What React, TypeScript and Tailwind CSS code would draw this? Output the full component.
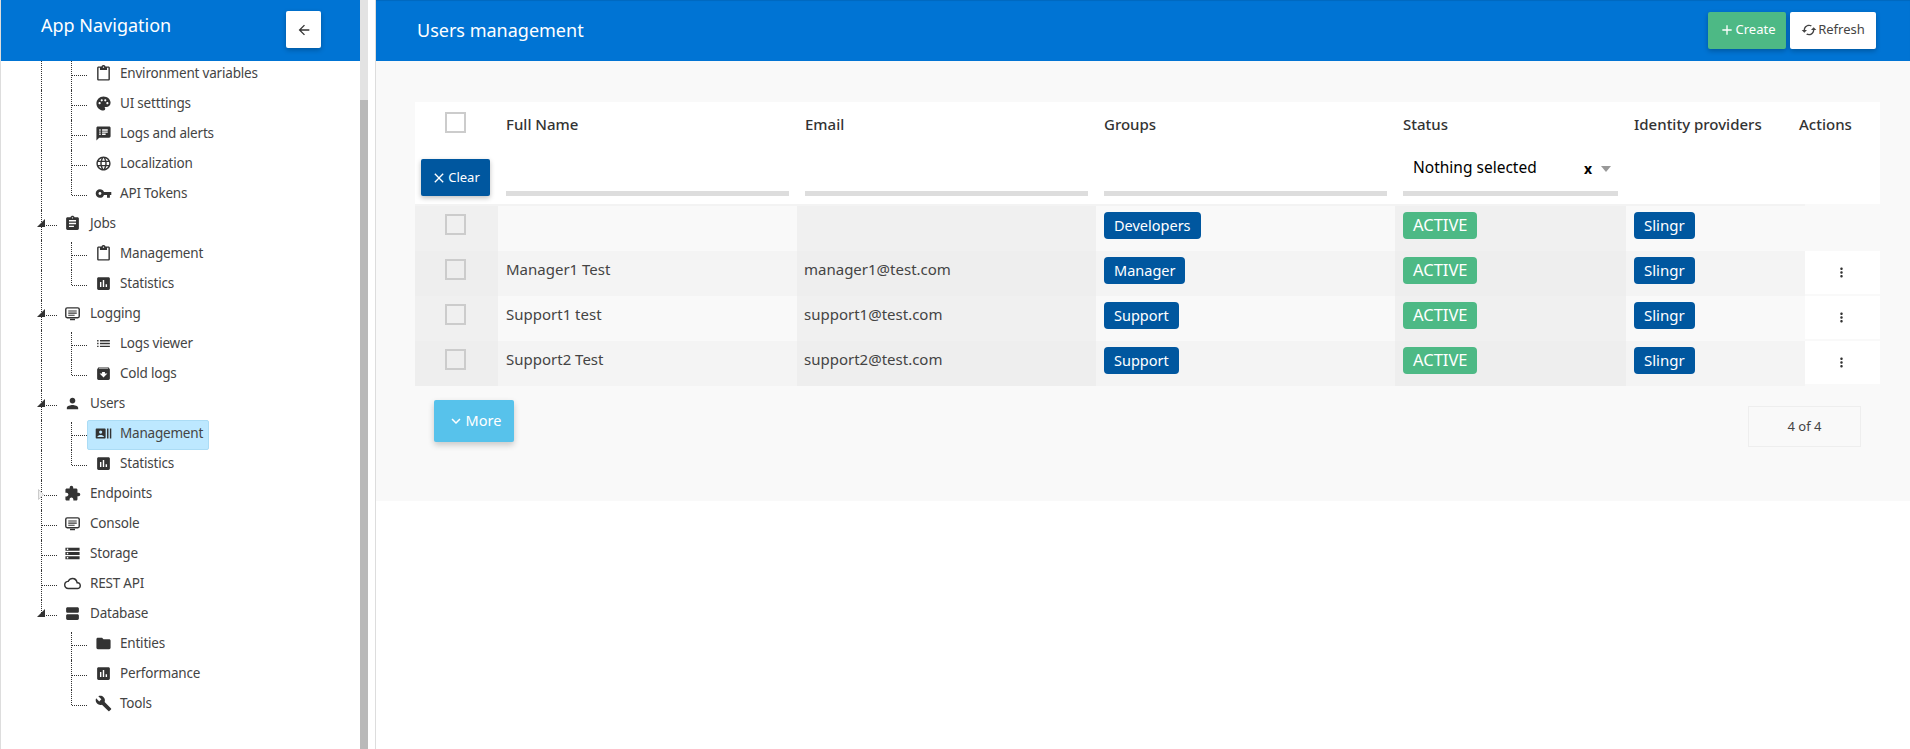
import {
  MdAdd,
  MdArchive,
  MdArrowBack,
  MdAssessment,
  MdAssignment,
  MdBuild,
  MdCached,
  MdClose,
  MdExtension,
  MdFolder,
  MdKeyboardArrowDown,
  MdLanguage,
  MdList,
  MdMoreVert,
  MdOutlineCloud,
  MdOutlineContentPaste,
  MdPalette,
  MdPerson,
  MdRecentActors,
  MdSpeakerNotes,
  MdStorage,
  MdViewAgenda,
  MdVpnKey,
} from "react-icons/md";
import type { ComponentType } from "react";

type IconProps = { className?: string };

type NavRow = {
  label: string;
  icon: ComponentType<IconProps>;
  depth: 1 | 2;
  first?: boolean;
  last?: boolean;
  marker?: "open" | "closed";
  active?: boolean;
  endTree?: boolean;
  noOuter?: boolean;
};

// monitor with text lines, not in the icon set
function ConsoleIcon({ className }: IconProps) {
  return (
    <svg className={className} viewBox="0 0 24 24" fill="none" stroke="currentColor">
      <rect x="2.5" y="4" width="19" height="14" rx="2" strokeWidth="2" />
      <path d="M6 8.5h12M6 11.5h12M6 14.5h9" strokeWidth="1.6" />
      <path d="M8.5 20.5h7" strokeWidth="2" />
    </svg>
  );
}

const navRows: NavRow[] = [
  { label: "Environment variables", icon: MdOutlineContentPaste, depth: 2 },
  { label: "UI setttings", icon: MdPalette, depth: 2 },
  { label: "Logs and alerts", icon: MdSpeakerNotes, depth: 2 },
  { label: "Localization", icon: MdLanguage, depth: 2 },
  { label: "API Tokens", icon: MdVpnKey, depth: 2, last: true },
  { label: "Jobs", icon: MdAssignment, depth: 1, marker: "open" },
  { label: "Management", icon: MdOutlineContentPaste, depth: 2, first: true },
  { label: "Statistics", icon: MdAssessment, depth: 2, last: true },
  { label: "Logging", icon: ConsoleIcon, depth: 1, marker: "open" },
  { label: "Logs viewer", icon: MdList, depth: 2, first: true },
  { label: "Cold logs", icon: MdArchive, depth: 2, last: true },
  { label: "Users", icon: MdPerson, depth: 1, marker: "open" },
  { label: "Management", icon: MdRecentActors, depth: 2, first: true, active: true },
  { label: "Statistics", icon: MdAssessment, depth: 2, last: true },
  { label: "Endpoints", icon: MdExtension, depth: 1, marker: "closed" },
  { label: "Console", icon: ConsoleIcon, depth: 1 },
  { label: "Storage", icon: MdStorage, depth: 1 },
  { label: "REST API", icon: MdOutlineCloud, depth: 1 },
  { label: "Database", icon: MdViewAgenda, depth: 1, marker: "open", endTree: true },
  { label: "Entities", icon: MdFolder, depth: 2, first: true, noOuter: true },
  { label: "Performance", icon: MdAssessment, depth: 2, noOuter: true },
  { label: "Tools", icon: MdBuild, depth: 2, last: true, noOuter: true },
];

const users = [
  { name: "", email: "", group: "Developers", actions: false },
  { name: "Manager1 Test", email: "manager1@test.com", group: "Manager", actions: true },
  { name: "Support1 test", email: "support1@test.com", group: "Support", actions: true },
  { name: "Support2 Test", email: "support2@test.com", group: "Support", actions: true },
];

function Dotted({ className }: { className: string }) {
  return <span className={`shrink-0 border-dotted border-[#333] ${className}`} />;
}

function TreeRow({ row }: { row: NavRow }) {
  const Icon = row.icon;
  return (
    <div className="relative flex h-[30px] items-center pl-[40px]">
      {/* outer guide */}
      {row.noOuter ? (
        <span className="w-px shrink-0" />
      ) : (
        <Dotted className={`w-0 border-l ${row.endTree ? "h-[15px] self-start" : "h-[30px]"}`} />
      )}
      {row.depth === 2 && (
        <>
          <span className="w-[29px] shrink-0" />
          <Dotted
            className={`w-0 border-l ${row.last ? "h-[15px] self-start" : row.first ? "h-[28px] self-end" : "h-[30px]"}`}
          />
        </>
      )}
      <Dotted className="w-[15px] border-t" />
      <div
        className={`flex h-[30px] items-center rounded-[2px] border ${row.depth === 2 ? "pl-[7px]" : "pl-[6px]"} ${row.active ? "border-[#abdcf5] bg-[#bde8ff] pr-[5px]" : "border-transparent"}`}
      >
        <Icon className="size-[17px] shrink-0 -translate-y-[2px] text-[#333]" />
        <span
          className={`-translate-y-[2px] text-[13.5px] tracking-[-0.2px] whitespace-nowrap text-[#444] ${row.depth === 2 ? "ml-[8px]" : "ml-[9px]"}`}
        >
          {row.label}
        </span>
      </div>
      {row.marker === "open" && (
        <svg className="absolute top-[9px] left-[36px] size-[8px]" viewBox="0 0 8 8">
          <path d="M8 0V8H0Z" fill="#333" />
        </svg>
      )}
      {row.marker === "closed" && (
        <svg className="absolute top-[9px] left-[37px] h-[11px] w-[6px]" viewBox="0 0 6 11">
          <path d="M.5.5 5.5 5.5.5 10.5Z" fill="#eee" stroke="#ccc" />
        </svg>
      )}
    </div>
  );
}

function Sidebar() {
  return (
    <aside className="flex h-[749px] w-[376px] shrink-0 overflow-hidden border-x border-[#ddd] bg-white">
      <div className="flex w-[359px] flex-col">
        <div className="relative z-10 flex h-[61px] shrink-0 justify-between bg-[#0074d4] pt-[11px] pr-[39px] pl-[40px]">
          <h1 className="text-[18px] leading-[28px] text-white">App Navigation</h1>
          <button className="flex h-[37px] w-[35px] items-center justify-center rounded-[2px] bg-white text-[#333] shadow-[0_2px_5px_rgba(0,0,0,0.25)]">
            <MdArrowBack className="size-[16px]" />
          </button>
        </div>
        <div className="-mt-px">
          {navRows.map((row, i) => (
            <TreeRow key={i} row={row} />
          ))}
        </div>
      </div>
      {/* scrollbar */}
      <div className="flex w-[8px] shrink-0 flex-col">
        <div className="h-[100px] bg-[#e3e3e3]" />
        <div className="flex-1 bg-[#b9b9b9]" />
      </div>
    </aside>
  );
}

function Badge({ children, className }: { children: string; className: string }) {
  return (
    <span className={`inline-flex h-[27px] items-center rounded-[4px] px-[10px] text-white ${className}`}>
      {children}
    </span>
  );
}

const headCols = "grid grid-cols-[83px_299px_299px_299px_231px_165px_89px]";
const bodyCols = "grid grid-cols-[83px_299px_299px_299px_231px_179px_75px]";

function HeaderCell({ label, filter }: { label: string; filter?: boolean }) {
  return (
    <div className="flex flex-col px-[8px]">
      <div className="h-[43px] pt-[10px] text-[15px] leading-[24px] font-medium whitespace-nowrap text-[#333]">{label}</div>
      {filter && <div className="mt-[46px] h-[5px] bg-[#ddd]" />}
    </div>
  );
}

function UsersTable() {
  return (
    <div className="w-[1465px]">
      <div className={`${headCols} h-[102px] bg-white`}>
        <div className="flex flex-col items-center pt-[10px] pr-[2px]">
          <span className="block size-[21px] border-2 border-[#ccc]" />
          <button className="mt-[26px] flex h-[37px] w-[69px] shrink-0 items-center justify-center gap-px rounded-[2px] bg-[#00579f] text-[13px] text-white shadow-[0_2px_5px_rgba(0,0,0,0.25)]">
            <MdClose className="size-[16px]" />
            Clear
          </button>
        </div>
        <HeaderCell label="Full Name" filter />
        <HeaderCell label="Email" filter />
        <HeaderCell label="Groups" filter />
        <div className="flex flex-col px-[8px]">
          <div className="h-[43px] pt-[10px] text-[15px] leading-[24px] font-medium text-[#333]">Status</div>
          <div className="flex h-[46px] items-center justify-between pr-[7px] pl-[10px] text-[15.5px] text-black">
            Nothing selected
            <span className="flex items-center gap-[9px]">
              <b className="text-[14px]">x</b>
              <span className="mt-[2px] border-x-[5px] border-t-[6px] border-x-transparent border-t-[#999]" />
            </span>
          </div>
          <div className="h-[5px] bg-[#ddd]" />
        </div>
        <HeaderCell label="Identity providers" />
        <HeaderCell label="Actions" />
      </div>
      <div className="h-[2px] w-[1390px] bg-[#f3f3f3]" />
      {users.map((u, i) => {
        const even = i % 2 === 1;
        const dark = even ? "bg-[#eeeeee]" : "bg-[#f0f0f0]";
        const light = even ? "bg-[#f4f4f4]" : "bg-[#f9f9f9]";
        return (
          <div key={i} className={`${bodyCols} h-[45px] text-[15px] text-[#444]`}>
            <div className={`flex justify-center pt-[8px] pr-[2px] ${dark}`}>
              <span className="block size-[21px] border-2 border-[#ccc]" />
            </div>
            <div className={`px-[8px] pt-[6px] leading-[24px] ${light}`}>{u.name}</div>
            <div className={`px-[7px] pt-[6px] leading-[24px] ${dark}`}>{u.email}</div>
            <div className={`px-[8px] pt-[6px] ${light}`}>
              <Badge className="bg-[#00579f] text-[14.5px]">{u.group}</Badge>
            </div>
            <div className={`px-[8px] pt-[6px] ${dark}`}>
              <Badge className="bg-[#4db985] text-[16.5px]">ACTIVE</Badge>
            </div>
            <div className={`px-[8px] pt-[6px] ${light}`}>
              <Badge className="bg-[#00579f] text-[15px]">Slingr</Badge>
            </div>
            {u.actions ? (
              <div className="flex h-[43px] items-center justify-center bg-white pr-[2px]">
                <MdMoreVert className="size-[15px] text-[#333]" />
              </div>
            ) : (
              <div />
            )}
          </div>
        );
      })}
    </div>
  );
}

export default function App() {
  return (
    <div className="flex h-[749px] w-[1910px] overflow-hidden bg-white font-['Noto_Sans',sans-serif]">
      <Sidebar />
      <main className="flex-1">
        <header className="flex h-[61px] items-center justify-between bg-[#0074d4] pr-[34px] pl-[41px] shadow-[inset_0_1px_1px_rgba(0,0,0,0.1)]">
          <h2 className="text-[18px] text-white">Users management</h2>
          <div className="-mt-[1px] flex gap-[4px]">
            <button className="flex h-[37px] w-[78px] items-center justify-center gap-px rounded-[2px] bg-[#4db985] text-[13px] text-white shadow-[0_2px_5px_rgba(0,0,0,0.25)]">
              <MdAdd className="size-[16px]" />
              Create
            </button>
            <button className="flex h-[37px] w-[86px] items-center justify-center gap-px rounded-[2px] bg-white text-[13px] text-[#444] shadow-[0_2px_5px_rgba(0,0,0,0.25)]">
              <MdCached className="size-[16px]" />
              Refresh
            </button>
          </div>
        </header>
        <section className="h-[440px] bg-[#f9f9f9] pt-[41px] pl-[39px]">
          <UsersTable />
          <div className="mt-[14px] flex items-start justify-between pr-[49px] pl-[19px]">
            <button className="flex h-[42px] w-[80px] items-center justify-center gap-px rounded-[2px] bg-[#57c2eb] text-[14.5px] text-white shadow-[0_3px_6px_rgba(0,0,0,0.2)]">
              <MdKeyboardArrowDown className="size-[18px]" />
              More
            </button>
            <div className="mt-[6px] flex h-[41px] w-[113px] items-center justify-center border border-[#eee] text-[13px] text-[#444]">
              4 of 4
            </div>
          </div>
        </section>
      </main>
    </div>
  );
}
